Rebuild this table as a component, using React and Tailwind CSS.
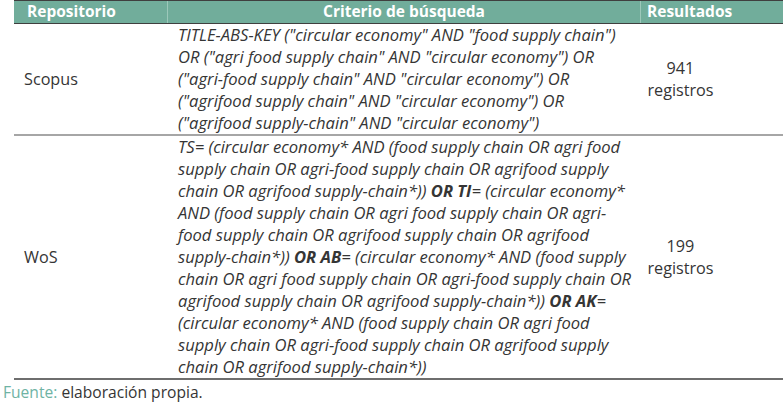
import React from 'react';

const font = { fontFamily: '"Open Sans", "Noto Sans", sans-serif' };

const scopusLines = [
  'TITLE-ABS-KEY ("circular economy" AND "food supply chain")',
  'OR ("agri food supply chain" AND "circular economy") OR',
  '("agri-food supply chain" AND "circular economy") OR',
  '("agrifood supply chain" AND "circular economy") OR',
  '("agrifood supply-chain" AND "circular economy")',
];

const B = ({ children }) => <b className="font-bold">{children}</b>;

const wosLines = [
  <>TS= (circular economy* AND (food supply chain OR agri food</>,
  <>supply chain OR agri-food supply chain OR agrifood supply</>,
  <>chain OR agrifood supply-chain*)) <B>OR TI</B>= (circular economy*</>,
  <>AND (food supply chain OR agri food supply chain OR agri-</>,
  <>food supply chain OR agrifood supply chain OR agrifood</>,
  <>supply-chain*)) <B>OR AB</B>= (circular economy* AND (food supply</>,
  <>chain OR agri food supply chain OR agri-food supply chain OR</>,
  <>agrifood supply chain OR agrifood supply-chain*)) <B>OR AK</B>=</>,
  <>(circular economy* AND (food supply chain OR agri food</>,
  <>supply chain OR agri-food supply chain OR agrifood supply</>,
  <>chain OR agrifood supply-chain*))</>,
];

const Row = ({ name, lines, count, border }) => (
  <div className={`grid grid-cols-[154px_473px_142px] ${border}`}>
    <div className="flex items-center pl-[10px]">{name}</div>
    <div className="pl-[10px] italic whitespace-nowrap text-[16.6px]">
      {lines.map((l, i) => (
        <div key={i} className="h-[22px] leading-[22px]">{l}</div>
      ))}
    </div>
    <div className="flex flex-col items-center justify-center pr-[63px] leading-[22px]">
      <span>{count}</span>
      <span>registros</span>
    </div>
  </div>
);

export default function App() {
  return (
    <div className="w-[783px] h-[404px] bg-white text-[#353535] text-[16.2px] overflow-hidden" style={font}>
      <div className="ml-[14px]">
        {/* Header */}
        <div className="grid grid-cols-[154px_473px_142px] h-[24px] bg-[#71ad9b] border-t border-b border-[#3f3f3f] text-white font-bold text-[15.5px] leading-[21px]">
          <div className="pl-[13px] border-r border-[#9cc8ba]">Repositorio</div>
          <div className="text-center border-r border-[#9cc8ba]">Criterio de búsqueda</div>
          <div className="pl-[6px]">Resultados</div>
        </div>

        <Row name="Scopus" lines={scopusLines} count="941" border="border-b-2 border-[#a6a6a6]" />
        <Row name="WoS" lines={wosLines} count="199" border="border-b-2 border-[#6e6e6e]" />
      </div>

      {/* Footer */}
      <p className="pl-[3px] pt-[1px] text-[15.6px] leading-[22px]">
        <span className="text-[#6fb3a4]">Fuente:</span> elaboración propia.
      </p>
    </div>
  );
}
